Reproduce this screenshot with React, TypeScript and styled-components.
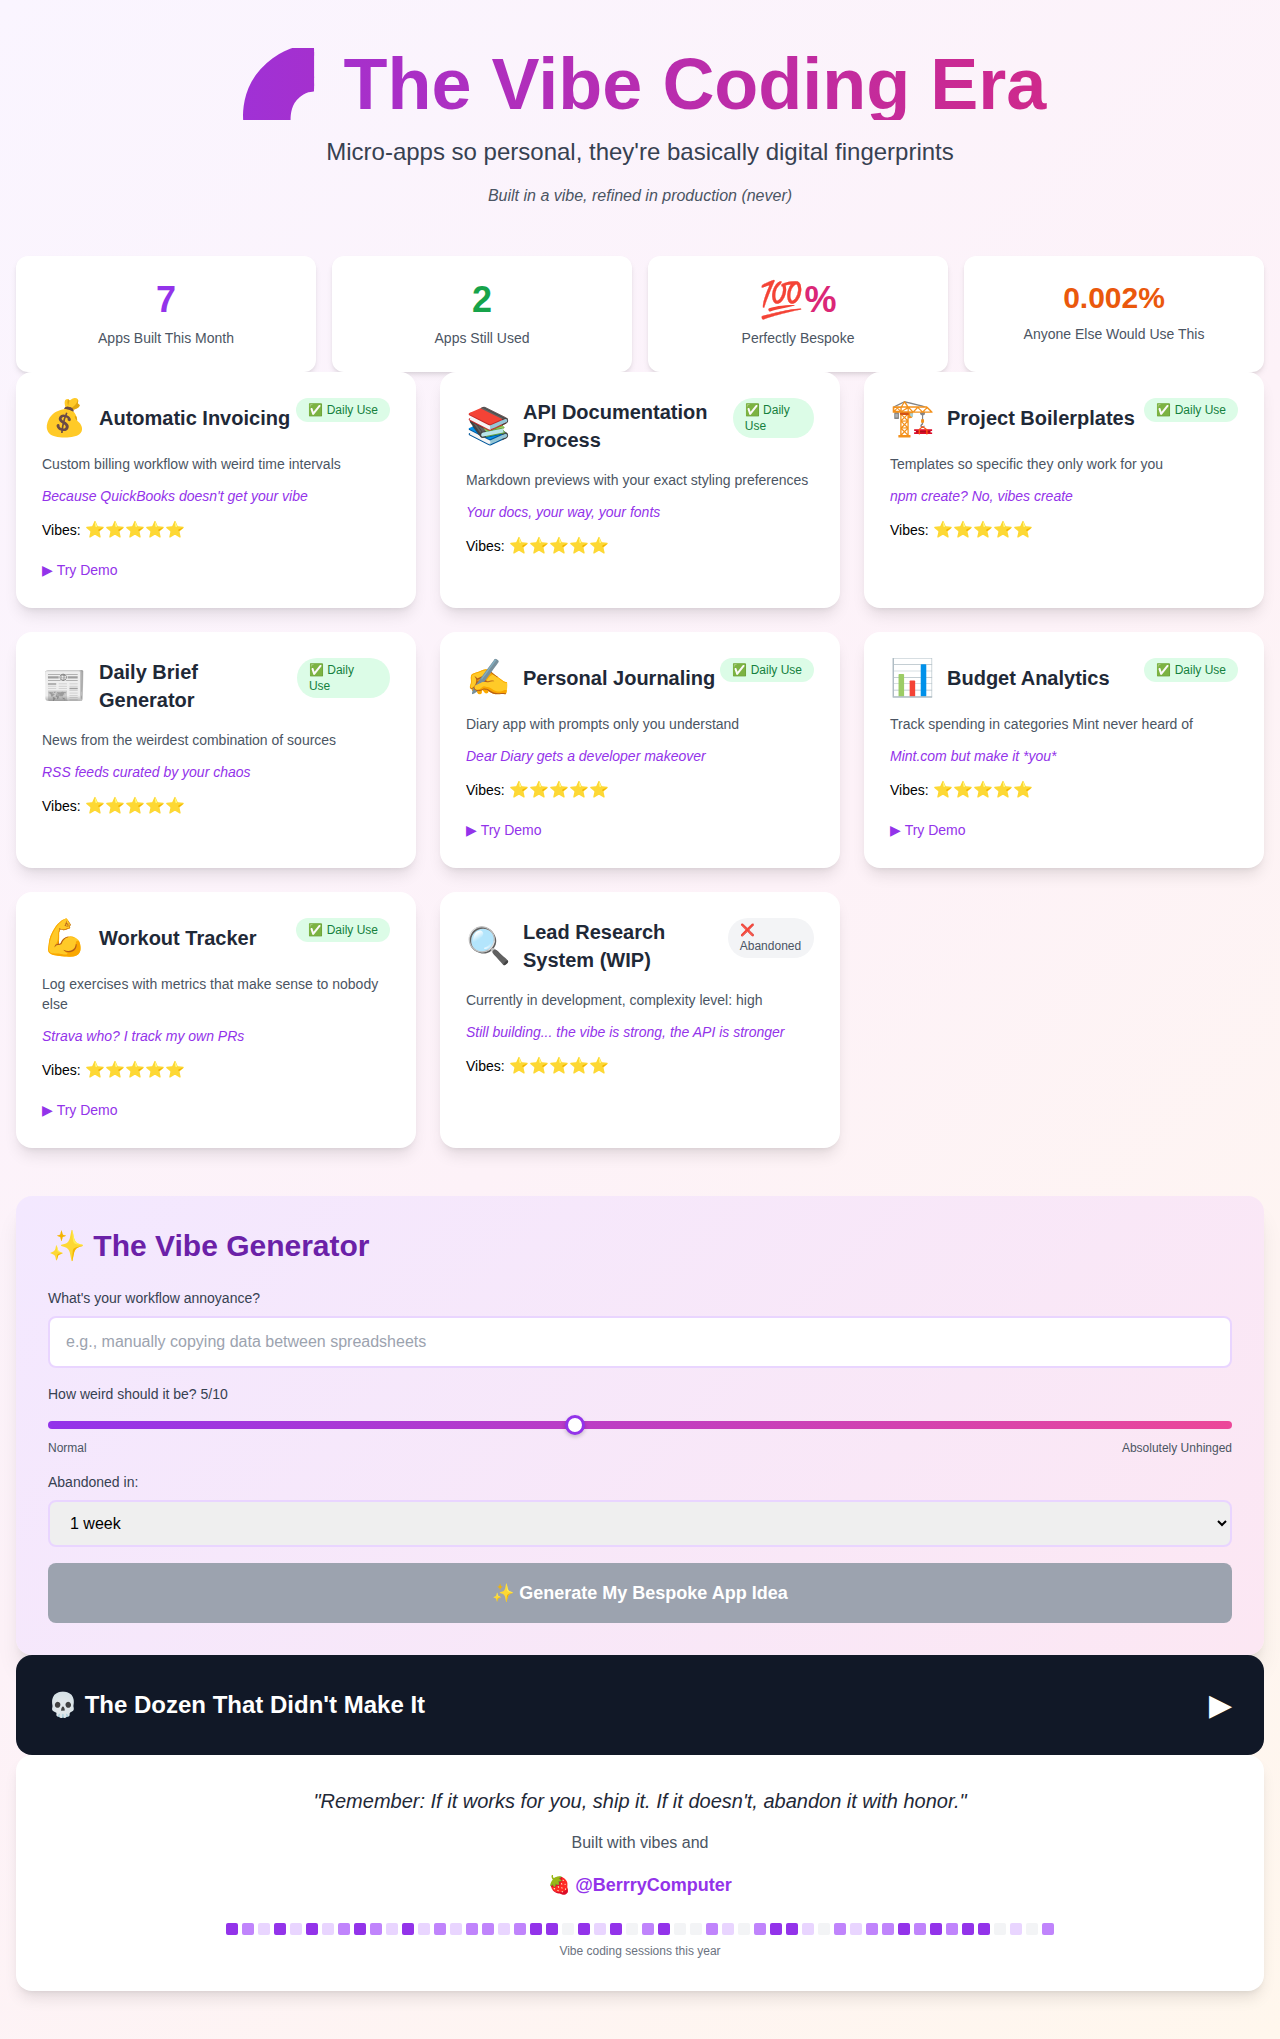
import React from "react";
import styled, { createGlobalStyle } from "styled-components";

const Global = createGlobalStyle`
  * { box-sizing: border-box; }
  html, body { margin: 0; padding: 0; }
  body {
    font-family: "Liberation Sans", Arial, sans-serif;
    background: linear-gradient(135deg, #faf5ff 0%, #fdf2f8 50%, #fff7ed 100%);
    min-height: 2039px;
    color: #000;
    line-height: 1.5;
  }
`;

const Page = styled.div`
  width: 1280px;
  padding: 48px 16px 47px;
`;

const Hero = styled.header`
  text-align: center;
  margin-bottom: 48px;
`;

const Title = styled.h1`
  margin: 0 0 16px;
  font-size: 72px;
  line-height: 72px;
  font-weight: 700;
  background: linear-gradient(90deg, #9333ea, #db2777);
  -webkit-background-clip: text;
  background-clip: text;
  color: transparent;
  -webkit-text-fill-color: transparent;
`;

const Subtitle = styled.p`
  margin: 0 0 16px;
  font-size: 24px;
  line-height: 32px;
  color: #374151;
`;

const Motto = styled.p`
  margin: 0;
  font-size: 16px;
  line-height: 24px;
  font-style: italic;
  color: #4b5563;
`;

const Stats = styled.section`
  display: grid;
  grid-template-columns: repeat(4, 1fr);
  gap: 16px;
`;

const StatCard = styled.div`
  height: 116px;
  padding: 24px;
  background: #fff;
  border-radius: 12px;
  box-shadow: 0 4px 6px -1px rgba(0, 0, 0, 0.1), 0 2px 4px -2px rgba(0, 0, 0, 0.1);
  text-align: center;
`;

const StatValue = styled.div<{ $color: string; $small?: boolean }>`
  font-size: ${(p) => (p.$small ? 30 : 36)}px;
  line-height: ${(p) => (p.$small ? 36 : 40)}px;
  font-weight: 700;
  color: ${(p) => p.$color};
  margin-bottom: 8px;
`;

const StatLabel = styled.div`
  font-size: 14px;
  line-height: 20px;
  color: #4b5563;
`;

const AppGrid = styled.section`
  display: grid;
  grid-template-columns: repeat(3, 1fr);
  gap: 24px;
  margin-bottom: 48px;
`;

const Card = styled.article`
  background: #fff;
  border: 2px solid transparent;
  border-radius: 16px;
  padding: 24px;
  box-shadow: 0 10px 15px -3px rgba(0, 0, 0, 0.1), 0 4px 6px -4px rgba(0, 0, 0, 0.1);
`;

const CardHead = styled.div`
  display: flex;
  justify-content: space-between;
  align-items: flex-start;
  margin-bottom: 16px;
`;

const CardTitleGroup = styled.div`
  display: flex;
  align-items: center;
  gap: 12px;
`;

const Emoji = styled.span`
  font-size: 36px;
  line-height: 40px;
`;

const CardTitle = styled.h3`
  margin: 0;
  font-size: 20px;
  line-height: 28px;
  font-weight: 700;
  color: #1f2937;
`;

const Badge = styled.span<{ $dead?: boolean }>`
  padding: 4px 12px;
  border-radius: 9999px;
  font-size: 12px;
  line-height: 16px;
  background: ${(p) => (p.$dead ? "#f3f4f6" : "#dcfce7")};
  color: ${(p) => (p.$dead ? "#4b5563" : "#15803d")};
`;

const Desc = styled.p`
  margin: 0 0 12px;
  font-size: 14px;
  line-height: 20px;
  color: #4b5563;
`;

const Tagline = styled.p`
  margin: 0 0 12px;
  font-size: 14px;
  line-height: 20px;
  font-style: italic;
  color: #9333ea;
`;

const Vibes = styled.div`
  font-size: 16px;
  line-height: 24px;
`;

const VibesLabel = styled.span`
  font-size: 14px;
`;

const DemoRow = styled.div`
  margin-top: 16px;
  line-height: 24px;
`;

const Demo = styled.a`
  font-size: 14px;
  color: #9333ea;
`;

const Generator = styled.section`
  padding: 32px;
  border-radius: 16px;
  background: linear-gradient(135deg, #f3e8ff, #fce7f3);
  box-shadow: 0 20px 25px -5px rgba(0, 0, 0, 0.1), 0 8px 10px -6px rgba(0, 0, 0, 0.1);
`;

const GenTitle = styled.h2`
  margin: 0 0 24px;
  font-size: 30px;
  line-height: 36px;
  font-weight: 700;
  color: #6b21a8;
`;

const Label = styled.label`
  display: block;
  margin-bottom: 8px;
  font-size: 14px;
  line-height: 20px;
  color: #374151;
`;

const Field = styled.div`
  margin-bottom: 16px;
`;

const TextInput = styled.input`
  display: block;
  width: 100%;
  height: 52px;
  padding: 12px 16px;
  border: 2px solid #e9d5ff;
  border-radius: 8px;
  font: 16px/24px "Liberation Sans", Arial, sans-serif;
  background: #fff;
  &::placeholder { color: #9ca3af; }
`;

const Range = styled.input`
  display: block;
  width: 100%;
  height: 8px;
  margin: 17px 0 0;
  appearance: none;
  -webkit-appearance: none;
  border-radius: 8px;
  background: linear-gradient(90deg, #9333ea, #ec4899);
  &::-webkit-slider-thumb {
    -webkit-appearance: none;
    width: 20px;
    height: 20px;
    border-radius: 50%;
    background: #fff;
    border: 3px solid #9333ea;
    box-shadow: 0 2px 4px rgba(0, 0, 0, 0.2);
  }
`;

const RangeEnds = styled.div`
  display: flex;
  justify-content: space-between;
  margin-top: 11px;
  font-size: 12px;
  line-height: 16px;
  color: #4b5563;
`;

const Select = styled.select`
  display: block;
  width: 100%;
  padding: 12px 16px;
  border: 2px solid #e9d5ff;
  border-radius: 8px;
  font: 16px "Liberation Sans", Arial, sans-serif;
  color: #000;
`;

const GenButton = styled.button`
  display: block;
  width: 100%;
  height: 60px;
  border: 0;
  border-radius: 8px;
  background: #9ca3af;
  color: #fff;
  font: 700 18px/28px "Liberation Sans", Arial, sans-serif;
`;

const Graveyard = styled.button`
  display: flex;
  width: 100%;
  align-items: center;
  justify-content: space-between;
  height: 100px;
  padding: 0 32px;
  border: 0;
  border-radius: 16px;
  background: #111827;
  color: #fff;
  font-family: "Liberation Sans", Arial, sans-serif;
`;

const GraveTitle = styled.span`
  font-size: 24px;
  line-height: 32px;
  font-weight: 700;
`;

const GraveArrow = styled.span`
  font-size: 30px;
  line-height: 36px;
`;

const Footer = styled.footer`
  padding: 32px;
  background: #fff;
  border-radius: 16px;
  text-align: center;
  box-shadow: 0 10px 15px -3px rgba(0, 0, 0, 0.1), 0 4px 6px -4px rgba(0, 0, 0, 0.1);
`;

const Quote = styled.p`
  margin: 0 0 16px;
  font-size: 20px;
  line-height: 28px;
  font-style: italic;
  color: #1f2937;
`;

const Built = styled.p`
  margin: 0 0 16px;
  font-size: 16px;
  line-height: 24px;
  color: #4b5563;
`;

const Handle = styled.p`
  margin: 0 0 24px;
  font-size: 18px;
  line-height: 28px;
`;

const HandleLink = styled.a`
  font-weight: 700;
  color: #9333ea;
`;

const Heat = styled.div`
  display: flex;
  justify-content: center;
  gap: 4px;
  margin-bottom: 8px;
`;

const HeatCell = styled.i<{ $l: number }>`
  width: 12px;
  height: 12px;
  border-radius: 2px;
  background: ${(p) => ["#f3f4f6", "#e9d5ff", "#c084fc", "#9333ea"][p.$l]};
`;

const HeatCaption = styled.p`
  margin: 0;
  font-size: 12px;
  line-height: 16px;
  color: #6b7280;
`;

type AppItem = { icon: string; title: string; desc: string; tag: string; demo: boolean; dead?: boolean };

const apps: AppItem[] = [
  { icon: "💰", title: "Automatic Invoicing", desc: "Custom billing workflow with weird time intervals", tag: "Because QuickBooks doesn't get your vibe", demo: true },
  { icon: "📚", title: "API Documentation Process", desc: "Markdown previews with your exact styling preferences", tag: "Your docs, your way, your fonts", demo: false },
  { icon: "🏗️", title: "Project Boilerplates", desc: "Templates so specific they only work for you", tag: "npm create? No, vibes create", demo: false },
  { icon: "📰", title: "Daily Brief Generator", desc: "News from the weirdest combination of sources", tag: "RSS feeds curated by your chaos", demo: false },
  { icon: "✍️", title: "Personal Journaling", desc: "Diary app with prompts only you understand", tag: "Dear Diary gets a developer makeover", demo: true },
  { icon: "📊", title: "Budget Analytics", desc: "Track spending in categories Mint never heard of", tag: "Mint.com but make it *you*", demo: true },
  { icon: "💪", title: "Workout Tracker", desc: "Log exercises with metrics that make sense to nobody else", tag: "Strava who? I track my own PRs", demo: true },
  { icon: "🔍", title: "Lead Research System (WIP)", desc: "Currently in development, complexity level: high", tag: "Still building... the vibe is strong, the API is stronger", demo: false, dead: true },
];

const heat = [
  3,2,1,3,1,3,1,2,3,2,1,3,1,2,1,2,2,1,2,3,3,0,3,1,3,0,
  2,3,0,0,2,1,0,2,3,3,1,0,2,1,2,2,3,2,3,2,3,3,0,1,0,2,
];

export default function App() {
  return (
    <Page>
      <Global />
      <Hero>
        <Title>🌈 The Vibe Coding Era</Title>
        <Subtitle>Micro-apps so personal, they're basically digital fingerprints</Subtitle>
        <Motto>Built in a vibe, refined in production (never)</Motto>
      </Hero>
      <Stats>
        <StatCard>
          <StatValue $color="#9333ea">7</StatValue>
          <StatLabel>Apps Built This Month</StatLabel>
        </StatCard>
        <StatCard>
          <StatValue $color="#16a34a">2</StatValue>
          <StatLabel>Apps Still Used</StatLabel>
        </StatCard>
        <StatCard>
          <StatValue $color="#db2777">💯%</StatValue>
          <StatLabel>Perfectly Bespoke</StatLabel>
        </StatCard>
        <StatCard>
          <StatValue $color="#ea580c" $small>0.002%</StatValue>
          <StatLabel>Anyone Else Would Use This</StatLabel>
        </StatCard>
      </Stats>
      <AppGrid>
        {apps.map((a) => (
          <Card key={a.title}>
            <CardHead>
              <CardTitleGroup>
                <Emoji>{a.icon}</Emoji>
                <CardTitle>{a.title}</CardTitle>
              </CardTitleGroup>
              {a.dead ? <Badge $dead>❌ Abandoned</Badge> : <Badge>✅ Daily Use</Badge>}
            </CardHead>
            <Desc>{a.desc}</Desc>
            <Tagline>{a.tag}</Tagline>
            <Vibes>
              <VibesLabel>Vibes: </VibesLabel>⭐⭐⭐⭐⭐
            </Vibes>
            {a.demo && (
              <DemoRow>
                <Demo>▶ Try Demo</Demo>
              </DemoRow>
            )}
          </Card>
        ))}
      </AppGrid>
      <Generator>
        <GenTitle>✨ The Vibe Generator</GenTitle>
        <Field>
          <Label>What's your workflow annoyance?</Label>
          <TextInput placeholder="e.g., manually copying data between spreadsheets" readOnly />
        </Field>
        <Field>
          <Label>How weird should it be? 5/10</Label>
          <Range type="range" min={1} max={10} defaultValue={5} />
          <RangeEnds>
            <span>Normal</span>
            <span>Absolutely Unhinged</span>
          </RangeEnds>
        </Field>
        <Field>
          <Label>Abandoned in:</Label>
          <Select defaultValue="1 week">
            <option>1 week</option>
            <option>1 month</option>
          </Select>
        </Field>
        <GenButton disabled>✨ Generate My Bespoke App Idea</GenButton>
      </Generator>
      <Graveyard>
        <GraveTitle>💀 The Dozen That Didn't Make It</GraveTitle>
        <GraveArrow>▶</GraveArrow>
      </Graveyard>
      <Footer>
        <Quote>"Remember: If it works for you, ship it. If it doesn't, abandon it with honor."</Quote>
        <Built>Built with vibes and</Built>
        <Handle>
          🍓 <HandleLink>@BerrryComputer</HandleLink>
        </Handle>
        <Heat>
          {heat.map((l, i) => (
            <HeatCell key={i} $l={l} />
          ))}
        </Heat>
        <HeatCaption>Vibe coding sessions this year</HeatCaption>
      </Footer>
    </Page>
  );
}
